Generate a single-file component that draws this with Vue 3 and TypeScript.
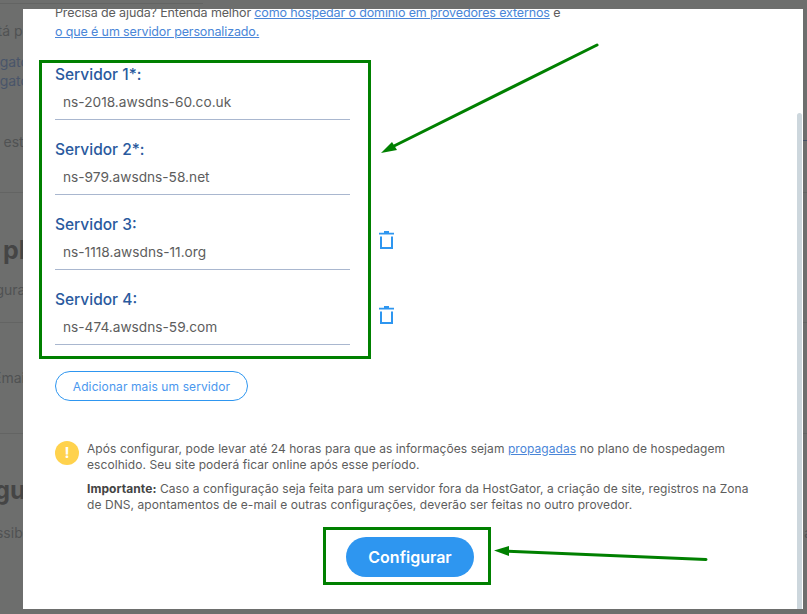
<script setup lang="ts">
interface Server { label: string; value: string; removable: boolean }
const servers: Server[] = [
  { label: 'Servidor 1*:', value: 'ns-2018.awsdns-60.co.uk', removable: false },
  { label: 'Servidor 2*:', value: 'ns-979.awsdns-58.net', removable: false },
  { label: 'Servidor 3:', value: 'ns-1118.awsdns-11.org', removable: true },
  { label: 'Servidor 4:', value: 'ns-474.awsdns-59.com', removable: true },
]
</script>

<template>
  <div class="page">
    <div class="behind">
      <div class="topline"></div>
      <section class="s s1">
        <p class="b b1">está p</p>
        <p class="b b2">Hostgator</p>
        <p class="b b3">Hostgator</p>
        <div class="b b4"><span>não está</span><i class="edge-link"></i></div>
      </section>
      <section class="s s2">
        <h2 class="bh bh1">plano</h2>
        <p class="b b5">Configurar</p>
      </section>
      <section class="s s3">
        <p class="b b6">Email</p>
      </section>
      <section class="s s4">
        <h2 class="bh bh2">Segur</h2>
        <div class="b b7"><span>possibi</span><span class="edge">a</span></div>
      </section>
    </div>

    <main class="modal">
      <div class="scrollbar"></div>
      <p class="help">
        Precisa de ajuda? Entenda melhor <a>como hospedar o domínio em provedores externos</a> e<br />
        <a>o que é um servidor personalizado.</a>
      </p>

      <form class="servers" @submit.prevent>
        <div v-for="s in servers" :key="s.label" class="row">
          <label class="field">
            <span class="label">{{ s.label }}</span>
            <span class="input">{{ s.value }}</span>
          </label>
          <svg v-if="s.removable" class="trash" viewBox="0 0 15 18" width="15" height="18" aria-label="Remover">
            <path d="M5 0h5v1.700h5v1.800H0V1.700h5z" fill="#2e96f0" />
            <path d="M2 5.500v11.500h11V5.500" fill="none" stroke="#2e96f0" stroke-width="2" />
          </svg>
        </div>
      </form>

      <button class="add" type="button">Adicionar mais um servidor</button>

      <section class="notice">
        <span class="warn">!</span>
        <div class="notice-text">
          <p>Após configurar, pode levar até 24 horas para que as informações sejam <a>propagadas</a> no plano de hospedagem escolhido. Seu site poderá ficar online após esse período.</p>
          <p><strong>Importante:</strong> Caso a configuração seja feita para um servidor fora da HostGator, a criação de site, registros na Zona de DNS, apontamentos de e-mail e outras configurações, deverão ser feitas no outro provedor.</p>
        </div>
      </section>

      <div class="actions">
        <button class="primary" type="button">Configurar</button>
      </div>
    </main>

    <svg class="marks" viewBox="0 0 807 614" width="807" height="614">
      <rect x="40.5" y="61.500" width="329" height="296" fill="none" stroke="#008000" stroke-width="3" />
      <rect x="324.5" y="528.500" width="165" height="55" fill="none" stroke="#008000" stroke-width="3" />
      <path d="M597 45 394 146" stroke="#008000" stroke-width="3" stroke-linecap="round" />
      <path d="M381 153 392 142 397 150z" fill="#008000" />
      <path d="M706 559.500 505 551" stroke="#008000" stroke-width="3" stroke-linecap="round" />
      <path d="M494 550.500 509 546 509 556z" fill="#008000" />
    </svg>
  </div>
</template>

<style>
html, body { margin: 0; background: #6d6e6d; }
</style>

<style scoped>
.page {
  position: relative;
  width: 807px;
  height: 614px;
  overflow: hidden;
  background: #6d6e6d;
  font-family: "Inter", "Noto Sans", sans-serif;
}
.behind { color: #505253; font-size: 14px; line-height: 19px; }
.topline { width: 203px; height: 1px; margin-top: 3px; background: #636463; }
.s { box-sizing: border-box; border-bottom: 1px solid #636463; }
.s1 { height: 189px; padding-top: 17px; }
.s2 { height: 130px; padding-top: 42px; }
.s3 { height: 111px; padding-top: 45px; }
.s4 { padding-top: 41px; border-bottom: 0; }
.b, .bh { margin: 0; white-space: nowrap; }
.b1 { margin-left: -18px; }
.b2 { margin: 12px 0 0 -31px; color: #49556a; }
.b3 { margin-left: -31px; color: #49556a; }
.b4 { display: flex; justify-content: space-between; margin: 42px 0 0 -25px; }
.edge-link { width: 4px; height: 8px; border-bottom: 1px solid #445066; }
.bh { font-size: 25px; line-height: 30px; font-weight: 700; color: #454545; }
.bh1 { margin-left: 3px; }
.b5 { margin: 15px 0 0 -40px; }
.b6 { margin-left: -7px; }
.bh2 { margin-left: -37px; }
.b7 { display: flex; justify-content: space-between; margin: 18px 0 0 -21px; }
.edge { margin-right: -5px; }

.modal {
  position: absolute;
  left: 23px;
  top: 9px;
  width: 780px;
  height: 600px;
  overflow: hidden;
  box-sizing: border-box;
  padding: 0 38px 0 32px;
  background: #fff;
  color: #5d5d5d;
}
.scrollbar {
  position: absolute;
  right: 1px;
  top: 104px;
  bottom: 0;
  width: 5px;
  border-radius: 3px 3px 0 0;
  background: #cdd7dd;
}
.help {
  margin: -6px 0 0;
  font-size: 12.5px;
  letter-spacing: -0.13px;
  line-height: 19px;
}
a { color: #4a86d8; text-decoration: underline; }
.servers { margin-top: 25px; display: flex; flex-direction: column; gap: 21px; }
.row { display: flex; align-items: flex-end; gap: 29px; height: 54px; }
.field { display: flex; flex-direction: column; width: 295px; height: 54px; border-bottom: 1px solid #a9b7cf; box-sizing: border-box; }
.label { font-size: 15.5px; line-height: 18px; font-weight: 500; color: #2a5a9e; }
.input { margin-top: 8px; padding-left: 8px; font-size: 13.7px; line-height: 20px; color: #5d5d5d; }
.trash { margin-bottom: 21px; flex: none; }
.add {
  display: block;
  margin-top: 26px;
  width: 193px;
  height: 30px;
  padding: 0;
  border: 1px solid #2e96f0;
  border-radius: 15px;
  background: #fff;
  color: #4a97ee;
  font: 400 12px "Inter", sans-serif;
  letter-spacing: 0.1px;
}
.notice { display: flex; gap: 8px; margin-top: 40px; }
.warn {
  flex: none;
  width: 24px;
  height: 24px;
  border-radius: 50%;
  background: #ffd24d;
  color: #fff;
  font-size: 15px;
  font-weight: 700;
  line-height: 24px;
  text-align: center;
}
.notice-text { font-size: 12px; letter-spacing: 0.07px; line-height: 16px; width: 670px; }
.notice-text p { margin: 0 0 8px; }
.notice-text strong { color: #444; font-weight: 700; }
.actions { display: flex; justify-content: center; margin-top: 16px; }
.primary {
  width: 128px;
  height: 40px;
  padding: 0;
  border: 0;
  border-radius: 20px;
  background: #2e96f0;
  color: #fff;
  font: 600 16px "Inter", sans-serif;
}
.marks { position: absolute; left: 0; top: 0; pointer-events: none; }
</style>
